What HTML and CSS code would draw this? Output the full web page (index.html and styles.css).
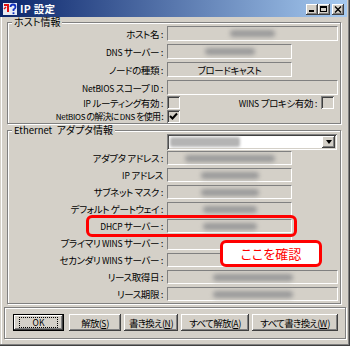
FILE: index.html
```html
<!DOCTYPE html>
<html lang="ja">
<head>
    <meta charset="UTF-8">
    <title>IP 設定</title>
    <link rel="stylesheet" href="styles.css">
</head>
<body>
    <div class="window">
        <div class="titlebar">
            <svg class="app-icon" viewBox="0 0 14 14">
                <rect x="0" y="1" width="14" height="12" fill="#e8ecf4"/>
                <path d="M1 3 H5 V10" fill="none" stroke="#e01010" stroke-width="2"/>
                <path d="M1 7 L3 5" fill="none" stroke="#e01010" stroke-width="1.5"/>
                <path d="M7.5 5 Q7.5 2.5 10 2.5 Q12.5 2.5 12.5 5 Q12.5 6.5 10.5 7.5 V9" fill="none" stroke="#1030c0" stroke-width="1.8"/>
                <rect x="9.6" y="10.3" width="1.8" height="1.8" fill="#1030c0"/>
            </svg>
            <span class="title">IP 設定</span>
            <div class="caption-btns">
                <span class="cbtn min"><i></i></span>
                <span class="cbtn max"><i></i></span>
                <span class="cbtn close">
                    <svg viewBox="0 0 8 7"><path d="M1 0.5 L7 6.5 M7 0.5 L1 6.5" stroke="#000" stroke-width="1.4"/></svg>
                </span>
            </div>
        </div>

        <fieldset class="group host">
            <legend>ホスト情報</legend>
            <div class="rows">
                <div class="row">
                    <label>ホスト名 :</label>
                    <div class="field wide"><i class="blur b45"></i></div>
                </div>
                <div class="row">
                    <label><span class="en">DNS</span> サーバー :</label>
                    <div class="field"><i class="blur b50"></i></div>
                </div>
                <div class="row">
                    <label>ノードの種類 :</label>
                    <div class="field">ブロードキャスト</div>
                </div>
                <div class="row last-field">
                    <label><span class="en">NetBIOS</span> スコープ <span class="en">ID</span> :</label>
                    <div class="field wide"></div>
                </div>
                <div class="row check">
                    <label><span class="en">IP</span> ルーティング有効 :</label>
                    <span class="checkbox"></span>
                    <span class="side-label"><span class="en">WINS</span> プロキシ有効 :</span>
                    <span class="checkbox"></span>
                </div>
                <div class="row check">
                    <label class="long"><span class="en">NetBIOS</span> の解決に <span class="en">DNS</span> を使用 :</label>
                    <span class="checkbox">
                        <svg viewBox="0 0 9 9"><path d="M1 4 L3.5 6.5 L8 1.5" fill="none" stroke="#000" stroke-width="2"/></svg>
                    </span>
                </div>
            </div>
        </fieldset>

        <fieldset class="group adapter">
            <legend><span class="en">Ethernet</span>&nbsp; アダプタ情報</legend>
            <div class="rows">
                <div class="row combo-row">
                    <label></label>
                    <div class="combo">
                        <i class="blur sel"></i>
                        <span class="arrow"><b></b></span>
                    </div>
                </div>
                <div class="row">
                    <label>アダプタ アドレス :</label>
                    <div class="field"><i class="blur b90"></i></div>
                </div>
                <div class="row">
                    <label><span class="en">IP</span> アドレス</label>
                    <div class="field"><i class="blur b58"></i></div>
                </div>
                <div class="row">
                    <label>サブネット マスク :</label>
                    <div class="field"><i class="blur b58"></i></div>
                </div>
                <div class="row">
                    <label>デフォルト ゲートウェイ :</label>
                    <div class="field"><i class="blur b54"></i></div>
                </div>
                <div class="row">
                    <label><span class="en">DHCP</span> サーバー :</label>
                    <div class="field"><i class="blur b54"></i></div>
                </div>
                <div class="row">
                    <label>プライマリ <span class="en">WINS</span> サーバー :</label>
                    <div class="field"></div>
                </div>
                <div class="row">
                    <label>セカンダリ <span class="en">WINS</span> サーバー :</label>
                    <div class="field"></div>
                </div>
                <div class="row">
                    <label>リース取得日 :</label>
                    <div class="field wide"><i class="blur b80"></i></div>
                </div>
                <div class="row">
                    <label>リース期限 :</label>
                    <div class="field wide"><i class="blur b80"></i></div>
                </div>
            </div>
        </fieldset>

        <div class="buttons">
            <button class="btn default w-ok"><span class="focus">OK</span></button>
            <button class="btn w-release">解放(<u>S</u>)</button>
            <button class="btn w-renew">書き換え(<u>N</u>)</button>
            <button class="btn w-release-all">すべて解放(<u>A</u>)</button>
            <button class="btn w-renew-all">すべて書き換え(<u>W</u>)</button>
        </div>

        <div class="highlight"></div>
        <div class="callout">ここを確認</div>
    </div>
</body>
</html>
```

FILE: styles.css
```css
* {
    box-sizing: border-box;
}
body {
    margin: 0;
    font-family: "Noto Sans CJK JP", sans-serif;
    font-size: 9.5px;
    letter-spacing: -0.4px;
    font-feature-settings: "palt";
    color: #000;
}
.en {
    font-size: 8.5px;
    letter-spacing: -0.2px;
}
.window {
    position: relative;
    width: 350px;
    height: 346px;
    padding: 0 3px 3px 3px;
    background: #d4d0c8;
    box-shadow: inset -1px -1px #404040, inset -2px -2px #808080, inset 1px 0 #d4d0c8, inset 2px 0 #fff;
    overflow: hidden;
}

/* title bar */
.titlebar {
    display: flex;
    align-items: center;
    height: 17px;
    margin-left: -3px;
    padding: 0 3px 0 3px;
    background: linear-gradient(to right, #0a246a, #a6caf0);
}
.app-icon {
    width: 14px;
    height: 14px;
    flex: none;
}
.title {
    margin-left: 3px;
    color: #fff;
    font-weight: bold;
    font-size: 10.5px;
    line-height: 12px;
    letter-spacing: 0.3px;
}
.caption-btns {
    margin-left: auto;
    display: flex;
    margin-top: 1px;
}
.cbtn {
    position: relative;
    width: 12px;
    height: 11px;
    background: #d4d0c8;
    box-shadow: inset -1px -1px #404040, inset 1px 1px #fff, inset -2px -2px #808080;
}
.cbtn.close {
    margin-left: 2px;
    display: flex;
    align-items: center;
    justify-content: center;
}
.cbtn.close svg {
    width: 8px;
    height: 7px;
}
.cbtn.min i {
    position: absolute;
    left: 3px;
    bottom: 3px;
    width: 5px;
    height: 2px;
    background: #000;
}
.cbtn.max i {
    position: absolute;
    left: 2px;
    top: 2px;
    width: 7px;
    height: 6px;
    border: 1px solid #000;
    border-top-width: 2px;
}

/* group boxes */
.group {
    margin: 0 0 0 4px;
    width: 334px;
    padding: 0 1px 0 0;
    min-inline-size: 0;
    border: 1px solid #808080;
    box-shadow: inset 1px 1px #fff, 1px 1px #fff;
}
.group legend {
    margin-left: 4px;
    padding: 0 2px;
    font-size: 10px;
    line-height: 10px;
    letter-spacing: 0;
    background: #d4d0c8;
}
.group legend .en {
    font-size: 9.5px;
    letter-spacing: 0;
}
.group.adapter {
    margin-top: 1px;
    padding-bottom: 2px;
}
.rows {
    margin-top: -1px;
}
.row {
    display: flex;
    align-items: center;
    height: 15px;
    margin-bottom: 3px;
}
.row label,
.side-label {
    line-height: 12px;
    white-space: nowrap;
}
.row label {
    flex: none;
    width: 155px;
    margin-right: 4px;
    text-align: right;
}
.row label.long {
    font-size: 9px;
    letter-spacing: -0.8px;
}
.row label.long .en {
    font-size: 8px;
    letter-spacing: -0.3px;
}
.row.last-field {
    margin-bottom: 1px;
}
.row.check {
    height: 13px;
    margin-bottom: 1px;
}
.row.check:last-child {
    margin-bottom: 0;
}
.adapter .row {
    height: 14px;
}
.adapter .row:last-child {
    margin-bottom: 0;
}
.adapter .combo-row {
    height: 16px;
    margin-bottom: 1px;
}

.field {
    width: 125px;
    height: 100%;
    display: flex;
    align-items: center;
    justify-content: center;
    border: 1px solid;
    border-color: #808080 #fff #fff #808080;
    background: #d4d0c8;
    white-space: nowrap;
    line-height: 12px;
}
.field.wide {
    width: 171px;
}
.blur {
    display: block;
    height: 7px;
    border-radius: 4px;
    background: #9a9a9a;
    filter: blur(2px);
}
.b45 { width: 45px; }
.b50 { width: 50px; }
.b54 { width: 54px; }
.b58 { width: 58px; }
.b80 { width: 80px; }
.b90 { width: 90px; }

.checkbox {
    flex: none;
    width: 13px;
    height: 13px;
    display: flex;
    align-items: center;
    justify-content: center;
    background: #d4d0c8;
    box-shadow: inset 1px 1px #808080, inset -1px -1px #fff, inset 2px 2px #404040, inset -2px -2px #d4d0c8;
}
.checkbox svg {
    width: 9px;
    height: 9px;
}
.side-label {
    margin-left: auto;
    margin-right: 4px;
}
.row.check .checkbox:last-child {
    margin-right: 5px;
}
.row.check .checkbox:first-of-type:last-child {
    margin-right: 0;
}

.combo {
    width: 170px;
    height: 100%;
    display: flex;
    align-items: center;
    padding: 2px;
    background: #fff;
    box-shadow: inset 1px 1px #808080, inset -1px -1px #fff, inset 2px 2px #404040, inset -2px -2px #d4d0c8;
}
.blur.sel {
    width: 70px;
    height: 10px;
    margin-left: 1px;
    border-radius: 2px;
    background: #b4b4b4;
    filter: blur(1.5px);
}
.combo .arrow {
    margin-left: auto;
    width: 13px;
    height: 12px;
    display: flex;
    align-items: center;
    justify-content: center;
    background: #d4d0c8;
    box-shadow: inset -1px -1px #404040, inset 1px 1px #fff, inset -2px -2px #808080;
}
.combo .arrow b {
    width: 0;
    height: 0;
    border-left: 3.5px solid transparent;
    border-right: 3.5px solid transparent;
    border-top: 4px solid #000;
}

/* buttons */
.buttons {
    margin: 3px 0 0 1px;
    width: 342px;
    height: 32px;
    padding: 6px 0 0 8px;
    display: flex;
    align-items: flex-start;
    gap: 3px;
    border: 1px solid #808080;
    box-shadow: inset 1px 1px #fff, 1px 1px #fff;
}
.btn {
    display: block;
    height: 17px;
    padding: 0;
    font-family: inherit;
    font-size: 9.5px;
    letter-spacing: -0.7px;
    font-feature-settings: "palt";
    line-height: 16px;
    text-align: center;
    color: #000;
    background: #d4d0c8;
    border: none;
    box-shadow: inset -1px -1px #404040, inset 1px 1px #fff, inset -2px -2px #808080;
    white-space: nowrap;
    overflow: visible;
}
.btn u {
    font-size: 8.5px;
    letter-spacing: -0.2px;
    text-underline-offset: 1px;
}
.btn.default {
    display: flex;
    align-items: center;
    justify-content: center;
    border: 1px solid #000;
    margin-right: 2px;
}
.btn .focus {
    width: 39px;
    height: 11px;
    font-size: 8.5px;
    letter-spacing: 0;
    line-height: 9px;
    border: 1px dotted #000;
    text-align: center;
}
.w-ok { width: 51px; }
.w-release { width: 52px; }
.w-renew { width: 54px; }
.w-release-all { width: 68px; }
.w-renew-all { width: 86px; }

/* annotations */
.highlight {
    position: absolute;
    left: 86px;
    top: 215px;
    width: 211px;
    height: 22px;
    border: 3px solid #ff0000;
    border-radius: 6px;
}
.callout {
    position: absolute;
    left: 220px;
    top: 240px;
    width: 102px;
    height: 27px;
    display: flex;
    align-items: center;
    justify-content: center;
    border: 3px solid #ff0000;
    border-radius: 6px;
    background: #fff;
    color: #ff0000;
    font-size: 13px;
    letter-spacing: 0;
}
```
